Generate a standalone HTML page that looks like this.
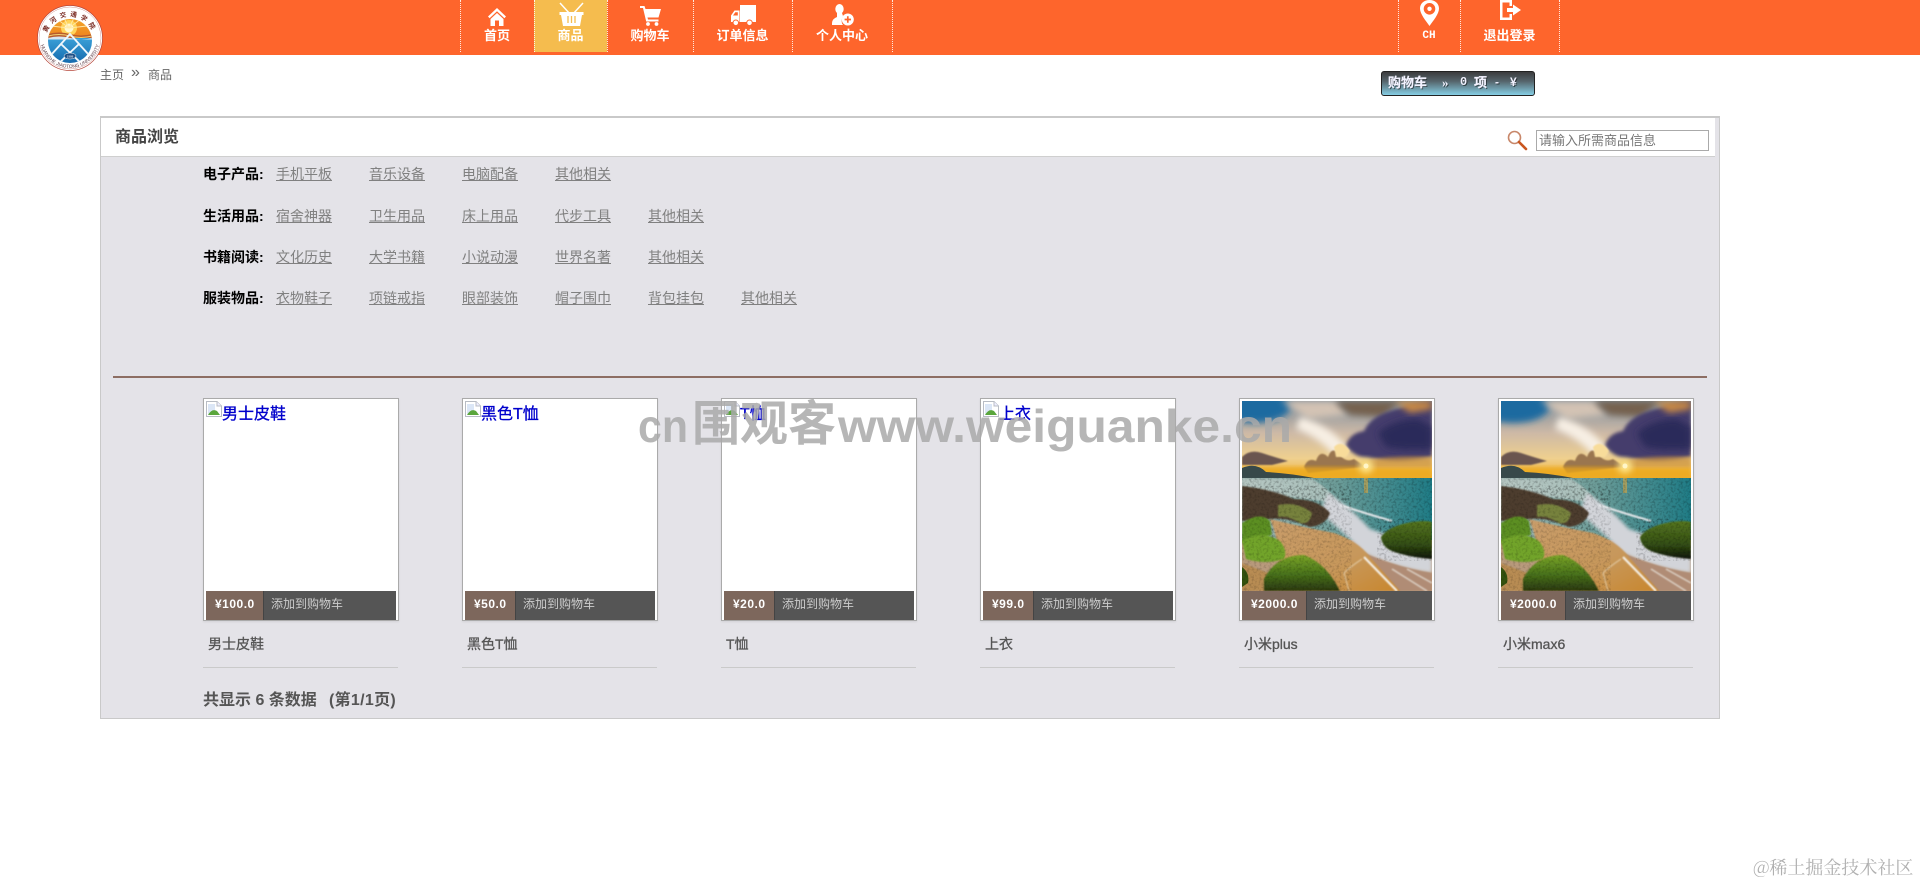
<!DOCTYPE html>
<html lang="zh">
<head>
<meta charset="utf-8">
<title>商品</title>
<style>
*{box-sizing:border-box;margin:0;padding:0}
html,body{width:1920px;height:883px;overflow:hidden;background:#fff}
body{position:relative;font-family:"Liberation Sans","Noto Sans CJK SC",sans-serif;font-size:14px;color:#555}
.a{position:absolute;white-space:nowrap}
#hd{position:absolute;left:0;top:0;width:1920px;height:55px;background:#fe652c}
.dv{position:absolute;top:0;height:52px;width:0;border-left:1px dotted rgba(255,255,255,.85)}
.nv{position:absolute;top:28px;height:16px;line-height:16px;text-align:center;color:#fff;font-weight:700;font-size:13px;white-space:nowrap}
#act{position:absolute;left:534px;top:0;width:73px;height:52px;background:#f5bc4e}
svg.ic{position:absolute;overflow:visible}
#panel{position:absolute;left:100px;top:116px;width:1620px;height:603px;background:#e4e3e8;border:1px solid #c9c9c9;border-top:2px solid #c9c9c9}
#ttl{position:absolute;left:0;top:0;width:1614px;height:39px;background:#fff;border-bottom:1px solid #cfcfcf}
.lab{position:absolute;left:203px;height:20px;line-height:20px;font-weight:700;color:#000;font-size:14px;white-space:nowrap}
.lk{position:absolute;height:20px;line-height:20px;color:#808080;font-size:14px;text-decoration:underline;white-space:nowrap}
.card{position:absolute;top:398px;width:196px;height:223px;background:#fff;border:1px solid #aaa;box-shadow:0 1px 2px rgba(0,0,0,.08)}
.alt{position:absolute;left:18px;top:7px;font-size:16px;line-height:18px;color:#0000cc;white-space:nowrap;-webkit-text-stroke:.3px #0000cc}
.brk{position:absolute;left:2px;top:2px}
.bar{position:absolute;left:2px;top:192px;width:190px;height:29px;background:#555}
.pr{position:absolute;left:0;top:0;height:29px;background:#7d675c;border-right:1px solid #444;color:#fff;font-weight:700;font-size:12px;line-height:27px;padding-left:9px;letter-spacing:.5px;white-space:nowrap}
.ad{position:absolute;top:0;height:29px;line-height:27px;color:#ccc;font-size:12px;white-space:nowrap}
.nm{position:absolute;top:635px;height:18px;line-height:18px;font-size:14px;color:#555;white-space:nowrap;-webkit-text-stroke:.3px #555}
.ul{position:absolute;top:667px;width:195px;height:1px;background:#cacaca}
.mc{position:absolute;top:74px;line-height:17px;font-size:13px;font-weight:700;color:#f2f2ff;text-shadow:1px 1px 0 rgba(0,0,0,.5);white-space:nowrap}
</style>
</head>
<body>

<svg width="0" height="0" style="position:absolute">
  <defs>
    <linearGradient id="sky" x1="0" y1="0" x2="0" y2="1">
      <stop offset="0" stop-color="#7d8f9e"/>
      <stop offset=".4" stop-color="#cdb9a6"/>
      <stop offset=".72" stop-color="#efd08e"/>
      <stop offset="1" stop-color="#eea825"/>
    </linearGradient>
    <linearGradient id="sea" x1="0" y1="0" x2="1" y2="0">
      <stop offset="0" stop-color="#a3b9b4"/>
      <stop offset=".5" stop-color="#6c9c98"/>
      <stop offset="1" stop-color="#1f7c86"/>
    </linearGradient>
    <linearGradient id="sand" x1="0" y1="0" x2="1" y2="1">
      <stop offset="0" stop-color="#c89c6a"/>
      <stop offset=".6" stop-color="#c7975a"/>
      <stop offset="1" stop-color="#c8862c"/>
    </linearGradient>
    <linearGradient id="mossR" x1="0" y1="0" x2="0" y2="1">
      <stop offset="0" stop-color="#55751f"/>
      <stop offset=".6" stop-color="#344f14"/>
      <stop offset="1" stop-color="#0f1608"/>
    </linearGradient>
    <linearGradient id="mossL" x1="0" y1="0" x2="0" y2="1">
      <stop offset="0" stop-color="#7aa528"/>
      <stop offset=".55" stop-color="#47701a"/>
      <stop offset="1" stop-color="#2a380f"/>
    </linearGradient>
    <filter id="b1" x="-20%" y="-20%" width="140%" height="140%"><feGaussianBlur stdDeviation=".9"/></filter>
    <filter id="b2" x="-20%" y="-20%" width="140%" height="140%"><feGaussianBlur stdDeviation="1.800"/></filter>
    <filter id="b3" x="-30%" y="-30%" width="160%" height="160%"><feGaussianBlur stdDeviation="3.500"/></filter>
    <filter id="tx" x="0" y="0" width="100%" height="100%">
      <feTurbulence type="fractalNoise" baseFrequency=".4" numOctaves="2" seed="7"/>
      <feColorMatrix values="0 0 0 0 0  0 0 0 0 0  0 0 0 0 0  0 0 0 1.800 -.8"/>
      <feComposite in2="SourceGraphic" operator="in"/>
    </filter>
    <clipPath id="cp190"><rect width="190" height="190"/></clipPath>
    <g id="scene" clip-path="url(#cp190)">
      <rect width="190" height="190" fill="#b89a7c"/>
      <rect width="190" height="80" fill="url(#sky)"/>
      <ellipse cx="12" cy="6" rx="36" ry="16" fill="#1c6aa0" filter="url(#b3)"/>
      <path d="M40 0L95 0L105 14L66 18Z" fill="#d3c3b4" filter="url(#b3)"/>
      <path d="M92 0L160 0L140 16L108 14Z" fill="#75604e" filter="url(#b3)"/>
      <path d="M58 16Q92 26 108 50L92 54Q76 36 54 28Z" fill="#f7efe4" filter="url(#b3)"/>
      <path d="M104 44Q108 32 122 30Q128 16 148 10Q170 3 190 0L190 56Q160 62 134 58Q112 58 104 44Z" fill="#453c6c" filter="url(#b2)"/>
      <path d="M136 32Q152 18 176 18L190 26L190 48Q160 50 144 46Z" fill="#2b2a5a" filter="url(#b3)"/>
      <path d="M152 0L190 0L190 8L168 12Z" fill="#c98a44" filter="url(#b3)"/>
      <path d="M0 56Q8 48 20 52Q32 56 46 60L30 64L0 64Z" fill="#6b5550" filter="url(#b1)"/>
      <path d="M62 66Q66 56 74 60Q78 48 86 56Q90 44 98 54Q104 62 112 58Q118 62 124 66L66 72Z" fill="#9a7650" filter="url(#b1)"/>
      <path d="M92 46Q100 38 108 50L104 56H94Z" fill="#f8dc9a" filter="url(#b1)"/>
      <rect y="66" width="190" height="11" fill="#eda818" opacity=".75" filter="url(#b2)"/>
      <path d="M120 60Q150 54 190 56V66H120Z" fill="#c9913c" opacity=".7" filter="url(#b2)"/>
      <circle cx="124" cy="65" r="7" fill="#ffe890" filter="url(#b3)"/>
      <circle cx="124" cy="65" r="2.500" fill="#fff6c8"/>
      <path d="M0 67Q14 61 24 71Q46 72 72 77L0 77Z" fill="#37494a"/>
      <rect y="77" width="190" height="62" fill="url(#sea)"/>
      <rect x="122" y="77" width="4" height="15" fill="#cda548" opacity=".65"/>
      <path d="M0 78H70Q88 88 96 102L0 90Z" fill="#bccbc6" opacity=".75" filter="url(#b1)"/>
      <rect y="77" width="190" height="62" fill="#0b2f38" filter="url(#tx)" opacity=".35"/>
      <path d="M86 92Q108 106 128 128Q158 138 190 146L190 172Q155 168 122 152Q98 128 78 112Z" fill="#d2d4d9" filter="url(#b2)"/>
      <path d="M98 104Q122 112 150 120" stroke="#e7e9ec" stroke-width="2" fill="none" filter="url(#b1)"/>
      <path d="M122 152Q155 166 190 172L190 190H150Z" fill="#b08c74" filter="url(#b1)"/>
      <path d="M150 168L185 190M165 168L190 182" stroke="#dcd0c4" stroke-width="1.500" fill="none" filter="url(#b1)"/>
      <path d="M28 118Q60 126 92 132Q116 140 128 156L158 190H34Q42 150 28 118Z" fill="url(#sand)" filter="url(#b1)"/>
      <path d="M122 156L155 190" stroke="#f4efe6" stroke-width="2.200" fill="none" filter="url(#b1)"/>
      <path d="M120 158Q108 166 102 172L107 190" stroke="#e8d6b6" stroke-width="1.200" fill="none" opacity=".75" filter="url(#b1)"/>
      <path d="M0 85Q28 88 52 98Q76 98 88 112Q84 124 68 126Q46 116 28 118L0 120Z" fill="#4e3e2e" filter="url(#b1)"/>
      <path d="M36 104Q56 100 70 112Q68 124 58 122Q46 114 36 116Z" fill="#77823e" filter="url(#b1)"/>
      <path d="M0 122Q18 110 28 120L30 134L0 142Z" fill="#5c8f22" filter="url(#b1)"/>
      <path d="M0 140Q20 128 38 140Q46 150 42 158Q24 164 4 158Z" fill="#72a42a" filter="url(#b1)"/>
      <path d="M0 162L26 172L34 190H0Z" fill="#b88c52" filter="url(#b1)"/>
      <path d="M0 166Q8 172 6 182L0 186Z" fill="#34520f"/>
      <path d="M22 178Q34 154 62 154Q84 162 98 190H22Z" fill="url(#mossL)" filter="url(#b1)"/>
      <path d="M139 136Q146 125 170 121Q184 119 190 121L190 158Q165 156 150 150Q140 146 139 136Z" fill="url(#mossR)" filter="url(#b1)"/>
      <rect y="85" width="110" height="105" fill="#120c04" filter="url(#tx)" opacity=".25"/>
      <rect x="135" y="118" width="55" height="42" fill="#0a1004" filter="url(#tx)" opacity=".3"/>
    </g>
    <g id="brk">
      <path d="M.5.5H11L15.5 5V15.5H.5Z" fill="#fff" stroke="#b8bcc4"/>
      <path d="M11 .5V5H15.5" fill="#eef" stroke="#b8bcc4"/>
      <path d="M2 3H9V10L2 13Z" fill="#dbe6f6"/>
      <path d="M2 14Q6 7 11 10L14 14Z" fill="#5aa63c"/>
    </g>
  </defs>
</svg>

<div id="hd"></div>
<div id="act"></div>
<div class="dv" style="left:460px"></div>
<div class="dv" style="left:534px"></div>
<div class="dv" style="left:607px"></div>
<div class="dv" style="left:693px"></div>
<div class="dv" style="left:792px"></div>
<div class="dv" style="left:892px"></div>
<div class="dv" style="left:1398px"></div>
<div class="dv" style="left:1460px"></div>
<div class="dv" style="left:1559px"></div>

<div class="nv" style="left:460px;width:74px">首页</div>
<div class="nv" style="left:534px;width:73px">商品</div>
<div class="nv" style="left:607px;width:86px">购物车</div>
<div class="nv" style="left:693px;width:99px">订单信息</div>
<div class="nv" style="left:792px;width:100px">个人中心</div>
<div class="nv" style="left:1398px;width:62px;font-size:11px;font-family:'Liberation Mono',monospace">CH</div>
<div class="nv" style="left:1460px;width:99px">退出登录</div>

<!-- home -->
<svg class="ic" style="left:488px;top:8px" width="18" height="18" viewBox="0 0 18 18" fill="#fff">
  <path d="M9 0L18 8.500L16.400 10.200L9 3.200L1.600 10.200L0 8.500Z"/>
  <path d="M9 5L15.500 11V18H11V12.500H7V18H2.500V11Z"/>
</svg>
<!-- basket -->
<svg class="ic" style="left:559px;top:2px" width="25" height="24" viewBox="0 0 25 24" fill="#fff">
  <path d="M1 1L11 12M24 1L14 12" stroke="#fff" stroke-width="1.500" fill="none"/>
  <path d="M.5 10H24.500V13H23L21 24H4L2 13H.5Z"/>
  <path d="M9 14V21M12.500 14V21M16 14V21" stroke="#f5bc4e" stroke-width="1.300"/>
</svg>
<!-- cart -->
<svg class="ic" style="left:640px;top:6px" width="21" height="20" viewBox="0 0 21 20" fill="#fff">
  <path d="M0 0H4.500L5.500 3H21L18.500 11.500H7.500L8 13.500H18.500V15.500H6.200L3 2H0Z"/>
  <circle cx="8" cy="18" r="1.900"/><circle cx="16.500" cy="18" r="1.900"/>
</svg>
<!-- truck -->
<svg class="ic" style="left:731px;top:5px" width="25" height="22" viewBox="0 0 25 22">
  <path fill="#fff" d="M9 0H25V17H9Z"/>
  <path fill="#fff" fill-rule="evenodd" d="M8.500 5.500V17H0V10.500L3.500 5.500ZM6.800 7.200H4.300L2 10.500H6.800Z"/>
  <circle cx="4.800" cy="17.800" r="2.800" fill="#fff" stroke="#fe652c" stroke-width="1"/>
  <circle cx="18.500" cy="17.800" r="2.800" fill="#fff" stroke="#fe652c" stroke-width="1"/>
</svg>
<!-- person plus -->
<svg class="ic" style="left:832px;top:4px" width="22" height="22" viewBox="0 0 22 22" fill="#fff">
  <ellipse cx="7.500" cy="5" rx="4.200" ry="5"/>
  <path d="M5 9H10L11 12Q9 16 10 19.500L11 21H0V19Q0 15 5 13Z"/>
  <circle cx="15.800" cy="15.500" r="6" fill="#fff"/>
  <path d="M15.800 12.300V18.700M12.600 15.500H19" stroke="#fe652c" stroke-width="1.700"/>
</svg>
<!-- pin -->
<svg class="ic" style="left:1420px;top:0" width="19" height="26" viewBox="0 0 19 26">
  <path fill-rule="evenodd" fill="#fff" d="M9.500 0C15 0 19 3.500 19 8.500C19 14 13 21 9.500 26C6 21 0 14 0 8.500C0 3.500 4 0 9.500 0ZM9.500 3A5.800 5.800 0 1 0 9.500 14.600A5.800 5.800 0 1 0 9.500 3Z"/>
  <circle cx="9.500" cy="8.800" r="2.200" fill="#fff"/>
</svg>
<!-- exit -->
<svg class="ic" style="left:1500px;top:0" width="21" height="20" viewBox="0 0 21 20" fill="#fff">
  <path d="M0 0H12V6H9.500V2.500H2.500V17.500H9.500V14H12V20H0Z"/>
  <path d="M7 8H13V4.500L21 10L13 15.500V12H7Z"/>
</svg>

<!-- logo -->
<svg class="ic" style="left:37px;top:5px" width="66" height="66" viewBox="0 0 66 66">
  <defs>
    <clipPath id="lc"><circle cx="33" cy="36" r="22"/></clipPath>
    <linearGradient id="ls" x1="0" y1="0" x2="0" y2="1"><stop offset="0" stop-color="#f2a52a"/><stop offset="1" stop-color="#ee8420"/></linearGradient>
    <linearGradient id="lb" x1="0" y1="0" x2="0" y2="1"><stop offset="0" stop-color="#3aa0d8"/><stop offset="1" stop-color="#1468ac"/></linearGradient>
    <path id="arcT" d="M8.500 36A24.500 24.500 0 0 1 57.500 36"/>
    <path id="arcB" d="M3 33A30 30 0 0 0 63 33"/>
  </defs>
  <circle cx="33" cy="33" r="32.500" fill="#fff" stroke="#b6483c" stroke-width=".7"/>
  <circle cx="33" cy="33" r="31" fill="none" stroke="#c8807a" stroke-width=".4"/>
  <g clip-path="url(#lc)">
    <rect x="11" y="14" width="44" height="18" fill="url(#ls)"/>
    <circle cx="32" cy="23" r="8" fill="#ffd45a"/>
    <circle cx="32" cy="23" r="4.500" fill="#fff8d0"/>
    <path d="M32 23L20 14M32 23L27 13M32 23L37 13M32 23L44 14M32 23L14 21M32 23L50 21" stroke="#ffe9a8" stroke-width=".9"/>
    <path d="M11 29Q22 26 33 29T55 29V34H11Z" fill="#b85a2c"/>
    <path d="M11 31Q22 28 33 31T55 31" stroke="#f3d070" stroke-width="1" fill="none"/>
    <rect x="11" y="33" width="44" height="26" fill="url(#lb)"/>
    <path d="M11 33Q22 30 33 33T55 33V34.500H11Z" fill="#d8e4ee"/>
    <path d="M14 50L33 29L52 50M20 60L42 39M46 60L24 39" stroke="#eef6fc" stroke-width="1.900" fill="none"/>
    <ellipse cx="33" cy="51" rx="6" ry="3" fill="#1d4f86" stroke="#fff" stroke-width=".5"/>
  </g>
  <text x="33" y="52.500" text-anchor="middle" font-family="'Liberation Sans',sans-serif" font-size="3" fill="#fff">1988</text>
  <text font-family="'Noto Sans CJK SC',sans-serif" font-size="6.500" font-weight="700" fill="#7a2a22"><textPath href="#arcT" startOffset="50%" text-anchor="middle" letter-spacing="3.500">黄河交通学院</textPath></text>
  <text font-family="'Liberation Sans',sans-serif" font-size="4.800" fill="#5d3b44"><textPath href="#arcB" startOffset="50%" text-anchor="middle">HUANGHE JIAOTONG UNIVERSITY</textPath></text>
</svg>

<!-- breadcrumb -->
<div class="a" style="left:100px;top:67px;line-height:17px;font-size:12px;color:#666">主页</div>
<div class="a" style="left:131px;top:64px;line-height:17px;font-size:16px;color:#666">»</div>
<div class="a" style="left:148px;top:67px;line-height:17px;font-size:12px;color:#666">商品</div>

<!-- mini cart -->
<div class="a" style="left:1381px;top:71px;width:154px;height:25px;border:1px solid #222;border-radius:3px;background:linear-gradient(#3c3c3d 0%,#55646b 40%,#86cee4 100%)"></div>
<div class="mc" style="left:1388px;-webkit-text-stroke:.2px #f2f2ff">购物车</div>
<div class="mc" style="left:1442px;font-size:13px;font-family:'Liberation Serif',serif">»</div>
<div class="mc" style="left:1460px;font-size:12px;font-family:'Liberation Mono',monospace">0</div>
<div class="mc" style="left:1474px;-webkit-text-stroke:.2px #f2f2ff">项</div>
<div class="mc" style="left:1495px;font-size:12px">-</div>
<div class="mc" style="left:1510px;font-size:12px">¥</div>

<!-- panel -->
<div id="panel"><div id="ttl"></div></div>
<div class="a" style="left:115px;top:127px;line-height:22px;font-size:16px;font-weight:700;color:#444">商品浏览</div>
<svg class="ic" style="left:1507px;top:130px" width="20" height="20" viewBox="0 0 20 20">
  <circle cx="7.500" cy="7.500" r="6" fill="#fff" stroke="#c8876a" stroke-width="1.600"/>
  <path d="M12 12L19 19" stroke="#c9561f" stroke-width="2.600" stroke-linecap="round"/>
</svg>
<div class="a" style="left:1536px;top:130px;width:173px;height:21px;background:#fff;border:1px solid #aaa;font-size:13px;line-height:19px;color:#777;padding-left:2px">请输入所需商品信息</div>

<!-- categories -->
<div class="lab" style="top:164px">电子产品:</div>
<div class="lk" style="top:164px;left:276px">手机平板</div>
<div class="lk" style="top:164px;left:369px">音乐设备</div>
<div class="lk" style="top:164px;left:462px">电脑配备</div>
<div class="lk" style="top:164px;left:555px">其他相关</div>

<div class="lab" style="top:206px">生活用品:</div>
<div class="lk" style="top:206px;left:276px">宿舍神器</div>
<div class="lk" style="top:206px;left:369px">卫生用品</div>
<div class="lk" style="top:206px;left:462px">床上用品</div>
<div class="lk" style="top:206px;left:555px">代步工具</div>
<div class="lk" style="top:206px;left:648px">其他相关</div>

<div class="lab" style="top:247px">书籍阅读:</div>
<div class="lk" style="top:247px;left:276px">文化历史</div>
<div class="lk" style="top:247px;left:369px">大学书籍</div>
<div class="lk" style="top:247px;left:462px">小说动漫</div>
<div class="lk" style="top:247px;left:555px">世界名著</div>
<div class="lk" style="top:247px;left:648px">其他相关</div>

<div class="lab" style="top:288px">服装物品:</div>
<div class="lk" style="top:288px;left:276px">衣物鞋子</div>
<div class="lk" style="top:288px;left:369px">项链戒指</div>
<div class="lk" style="top:288px;left:462px">眼部装饰</div>
<div class="lk" style="top:288px;left:555px">帽子围巾</div>
<div class="lk" style="top:288px;left:648px">背包挂包</div>
<div class="lk" style="top:288px;left:741px">其他相关</div>

<div class="a" style="left:113px;top:376px;width:1594px;height:2px;background:#8d6e63"></div>

<!-- cards -->
<div class="card" style="left:203px">
  <svg class="brk" width="16" height="16"><use href="#brk"/></svg>
  <div class="alt">男士皮鞋</div>
  <div class="bar"><div class="pr" style="width:58px">¥100.0</div><div class="ad" style="left:65px">添加到购物车</div></div>
</div>
<div class="card" style="left:462px">
  <svg class="brk" width="16" height="16"><use href="#brk"/></svg>
  <div class="alt">黑色T恤</div>
  <div class="bar"><div class="pr" style="width:51px">¥50.0</div><div class="ad" style="left:58px">添加到购物车</div></div>
</div>
<div class="card" style="left:721px">
  <svg class="brk" width="16" height="16"><use href="#brk"/></svg>
  <div class="alt">T恤</div>
  <div class="bar"><div class="pr" style="width:51px">¥20.0</div><div class="ad" style="left:58px">添加到购物车</div></div>
</div>
<div class="card" style="left:980px">
  <svg class="brk" width="16" height="16"><use href="#brk"/></svg>
  <div class="alt">上衣</div>
  <div class="bar"><div class="pr" style="width:51px">¥99.0</div><div class="ad" style="left:58px">添加到购物车</div></div>
</div>
<div class="card" style="left:1239px">
  <svg style="position:absolute;left:2px;top:2px" width="190" height="190" viewBox="0 0 190 190"><use href="#scene"/></svg>
  <div class="bar"><div class="pr" style="width:65px">¥2000.0</div><div class="ad" style="left:72px">添加到购物车</div></div>
</div>
<div class="card" style="left:1498px">
  <svg style="position:absolute;left:2px;top:2px" width="190" height="190" viewBox="0 0 190 190"><use href="#scene"/></svg>
  <div class="bar"><div class="pr" style="width:65px">¥2000.0</div><div class="ad" style="left:72px">添加到购物车</div></div>
</div>

<div class="nm" style="left:208px">男士皮鞋</div><div class="ul" style="left:203px"></div>
<div class="nm" style="left:467px">黑色T恤</div><div class="ul" style="left:462px"></div>
<div class="nm" style="left:726px">T恤</div><div class="ul" style="left:721px"></div>
<div class="nm" style="left:985px">上衣</div><div class="ul" style="left:980px"></div>
<div class="nm" style="left:1244px">小米plus</div><div class="ul" style="left:1239px"></div>
<div class="nm" style="left:1503px">小米max6</div><div class="ul" style="left:1498px"></div>

<div class="a" style="left:203px;top:690px;line-height:22px;font-size:16px;font-weight:700;color:#555">共显示 6 条数据</div>
<div class="a" style="left:329px;top:690px;line-height:22px;font-size:16px;font-weight:700;color:#555;letter-spacing:.3px">(第1/1页)</div>

<!-- overlay watermark -->
<svg class="ic" style="left:0;top:0" width="1920" height="883">
  <g fill="#a9a9a9" fill-opacity=".85" font-family="'Liberation Sans','Noto Sans CJK SC',sans-serif" font-weight="700">
    <text x="638" y="442" font-size="46" textLength="50" lengthAdjust="spacingAndGlyphs">cn</text>
    <text x="692" y="440" font-size="48">围观客</text>
    <text x="838" y="442" font-size="46" textLength="454" lengthAdjust="spacingAndGlyphs">www.weiguanke.cn</text>
  </g>
</svg>

<div class="a" style="left:1753px;top:854px;line-height:26px;font-size:18px;color:#b0b0b0;font-family:'Noto Serif CJK SC',serif">@稀土掘金技术社区</div>

</body>
</html>
